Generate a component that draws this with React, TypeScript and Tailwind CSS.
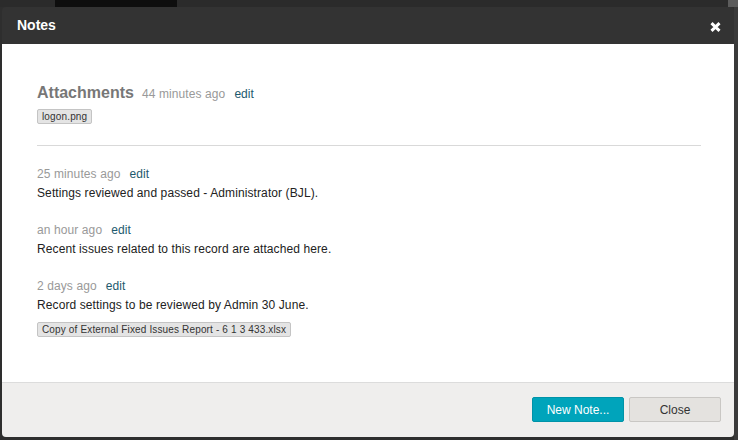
import React from "react";

function Tag({ children }: { children: React.ReactNode }) {
  return (
    <span className="inline-flex items-center h-[15px] px-[4px] border border-[#c4c4c4] bg-[#e4e4e4] rounded-[2px] text-[10px] leading-[13px] tracking-[0.15px] text-[#333]">
      {children}
    </span>
  );
}

function Note({ when, text, tag }: { when: string; text: string; tag?: string }) {
  return (
    <div className="mb-[18px]">
      <div className="leading-[19px] text-[12px] tracking-[0.1px]">
        <span className="text-[#999]">{when}</span>
        <span className="ml-[9px] text-[#1d5a6e]">edit</span>
      </div>
      <div className="leading-[19px] text-[12px] tracking-[0.1px] text-[#222]">{text}</div>
      {tag && (
        <div className="mt-[7px] flex">
          <Tag>{tag}</Tag>
        </div>
      )}
    </div>
  );
}

export default function App() {
  return (
    <div className="w-[738px] h-[440px] bg-[#2e2e2e] flex flex-col font-['Liberation_Sans',Arial,sans-serif] overflow-hidden">
      <div className="h-[7px] flex shrink-0">
        <div className="w-[55px] bg-[#2b2b2b]" />
        <div className="w-[122px] bg-[#0e0e0e]" />
        <div className="flex-1 bg-[#2b2b2b]" />
        <div className="w-[10px] bg-[#5c5c5c]" />
      </div>
      <div className="flex flex-1">
        <div className="w-[2px]" />
        <div className="w-[732px] h-[430px] flex flex-col rounded-[4px] overflow-hidden">
          <div className="h-[37px] shrink-0 bg-[#333333] pl-[15px] pr-[13px] flex items-center justify-between">
            <span className="text-white font-bold text-[14px]">Notes</span>
            <svg width="11" height="10" viewBox="0 0 11 10" className="mt-[2px]">
              <path d="M1.5 1.2 L9.5 8.8 M9.5 1.2 L1.5 8.8" stroke="#fff" strokeWidth="3" strokeLinecap="butt" />
            </svg>
          </div>
          <div className="flex-1 bg-white pt-[39px] pl-[35px] pr-[33px]">
            <div className="leading-[20px]">
              <span className="text-[16px] font-bold text-[#777]">Attachments</span>
              <span className="ml-[8px] text-[12px] tracking-[0.1px] text-[#999]">44 minutes ago</span>
              <span className="ml-[9px] text-[12px] text-[#1d5a6e]">edit</span>
            </div>
            <div className="mt-[5px] flex">
              <Tag>logon.png</Tag>
            </div>
            <div className="mt-[21px] h-px bg-[#d9d9d9] mb-[19px]" />
            <Note when="25 minutes ago" text="Settings reviewed and passed - Administrator (BJL)." />
            <Note when="an hour ago" text="Recent issues related to this record are attached here." />
            <Note
              when="2 days ago"
              text="Record settings to be reviewed by Admin 30 June."
              tag="Copy of External Fixed Issues Report - 6 1 3 433.xlsx"
            />
          </div>
          <div className="h-[55px] shrink-0 border-t border-[#dcdcdc] bg-[#efeeed] flex justify-end items-start pt-[14px] pr-[13px] gap-[5px]">
            <button className="w-[92px] h-[25px] bg-[#00a4bb] border border-[#0093a8] rounded-[2px] text-white text-[12px]">
              New Note...
            </button>
            <button className="w-[92px] h-[25px] bg-[#e4e2df] border border-[#c9c7c4] rounded-[2px] text-[#333] text-[12px]">
              Close
            </button>
          </div>
        </div>
        <div className="flex-1 bg-[#3a3a3a]" />
      </div>
    </div>
  );
}
